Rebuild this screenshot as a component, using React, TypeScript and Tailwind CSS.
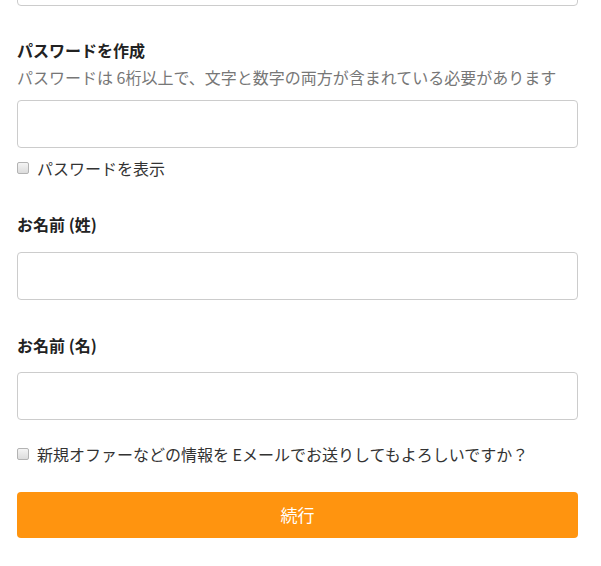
import { type FC } from 'react';

const font = { fontFamily: '"Noto Sans CJK JP", "Noto Sans", sans-serif' };

const Field: FC = () => (
  <div className="h-[48px] w-[561px] rounded-[4px] border border-[#cccccc] bg-white" />
);

const Check: FC<{ label: string }> = ({ label }) => (
  <label className="flex items-center h-[24px] text-[16px] text-[#333333]">
    <span className="w-[12px] h-[12px] rounded-[2px] border border-[#b3b3b3] bg-gradient-to-b from-[#f4f4f4] to-[#dcdcdc] mr-[8px]" />
    {label}
  </label>
);

const App: FC = () => {
  return (
    <div className="w-[601px] h-[566px] overflow-hidden bg-white pl-[17px]" style={font}>
      <div className="-mt-[42px]">
        <Field />
      </div>

      <h3 className="mt-[32px] h-[24px] leading-[24px] text-[16px] font-bold text-[#222222]">パスワードを作成</h3>
      <p className="mt-[3px] h-[24px] leading-[24px] text-[16px] text-[#777777]">
        パスワードは 6桁以上で、文字と数字の両方が含まれている必要があります
      </p>
      <div className="mt-[11px]">
        <Field />
      </div>
      <div className="mt-[8px]">
        <Check label="パスワードを表示" />
      </div>

      <h3 className="mt-[32px] h-[24px] leading-[24px] text-[16px] font-bold text-[#222222]">お名前 (姓)</h3>
      <div className="mt-[16px]">
        <Field />
      </div>

      <h3 className="mt-[33px] h-[24px] leading-[24px] text-[16px] font-bold text-[#222222]">お名前 (名)</h3>
      <div className="mt-[15px]">
        <Field />
      </div>

      <div className="mt-[22px]">
        <Check label="新規オファーなどの情報を Eメールでお送りしてもよろしいですか？" />
      </div>

      <button className="mt-[26px] w-[561px] h-[46px] rounded-[4px] bg-[#ff940f] text-white text-[17px]">
        続行
      </button>
    </div>
  );
};

export default App;
